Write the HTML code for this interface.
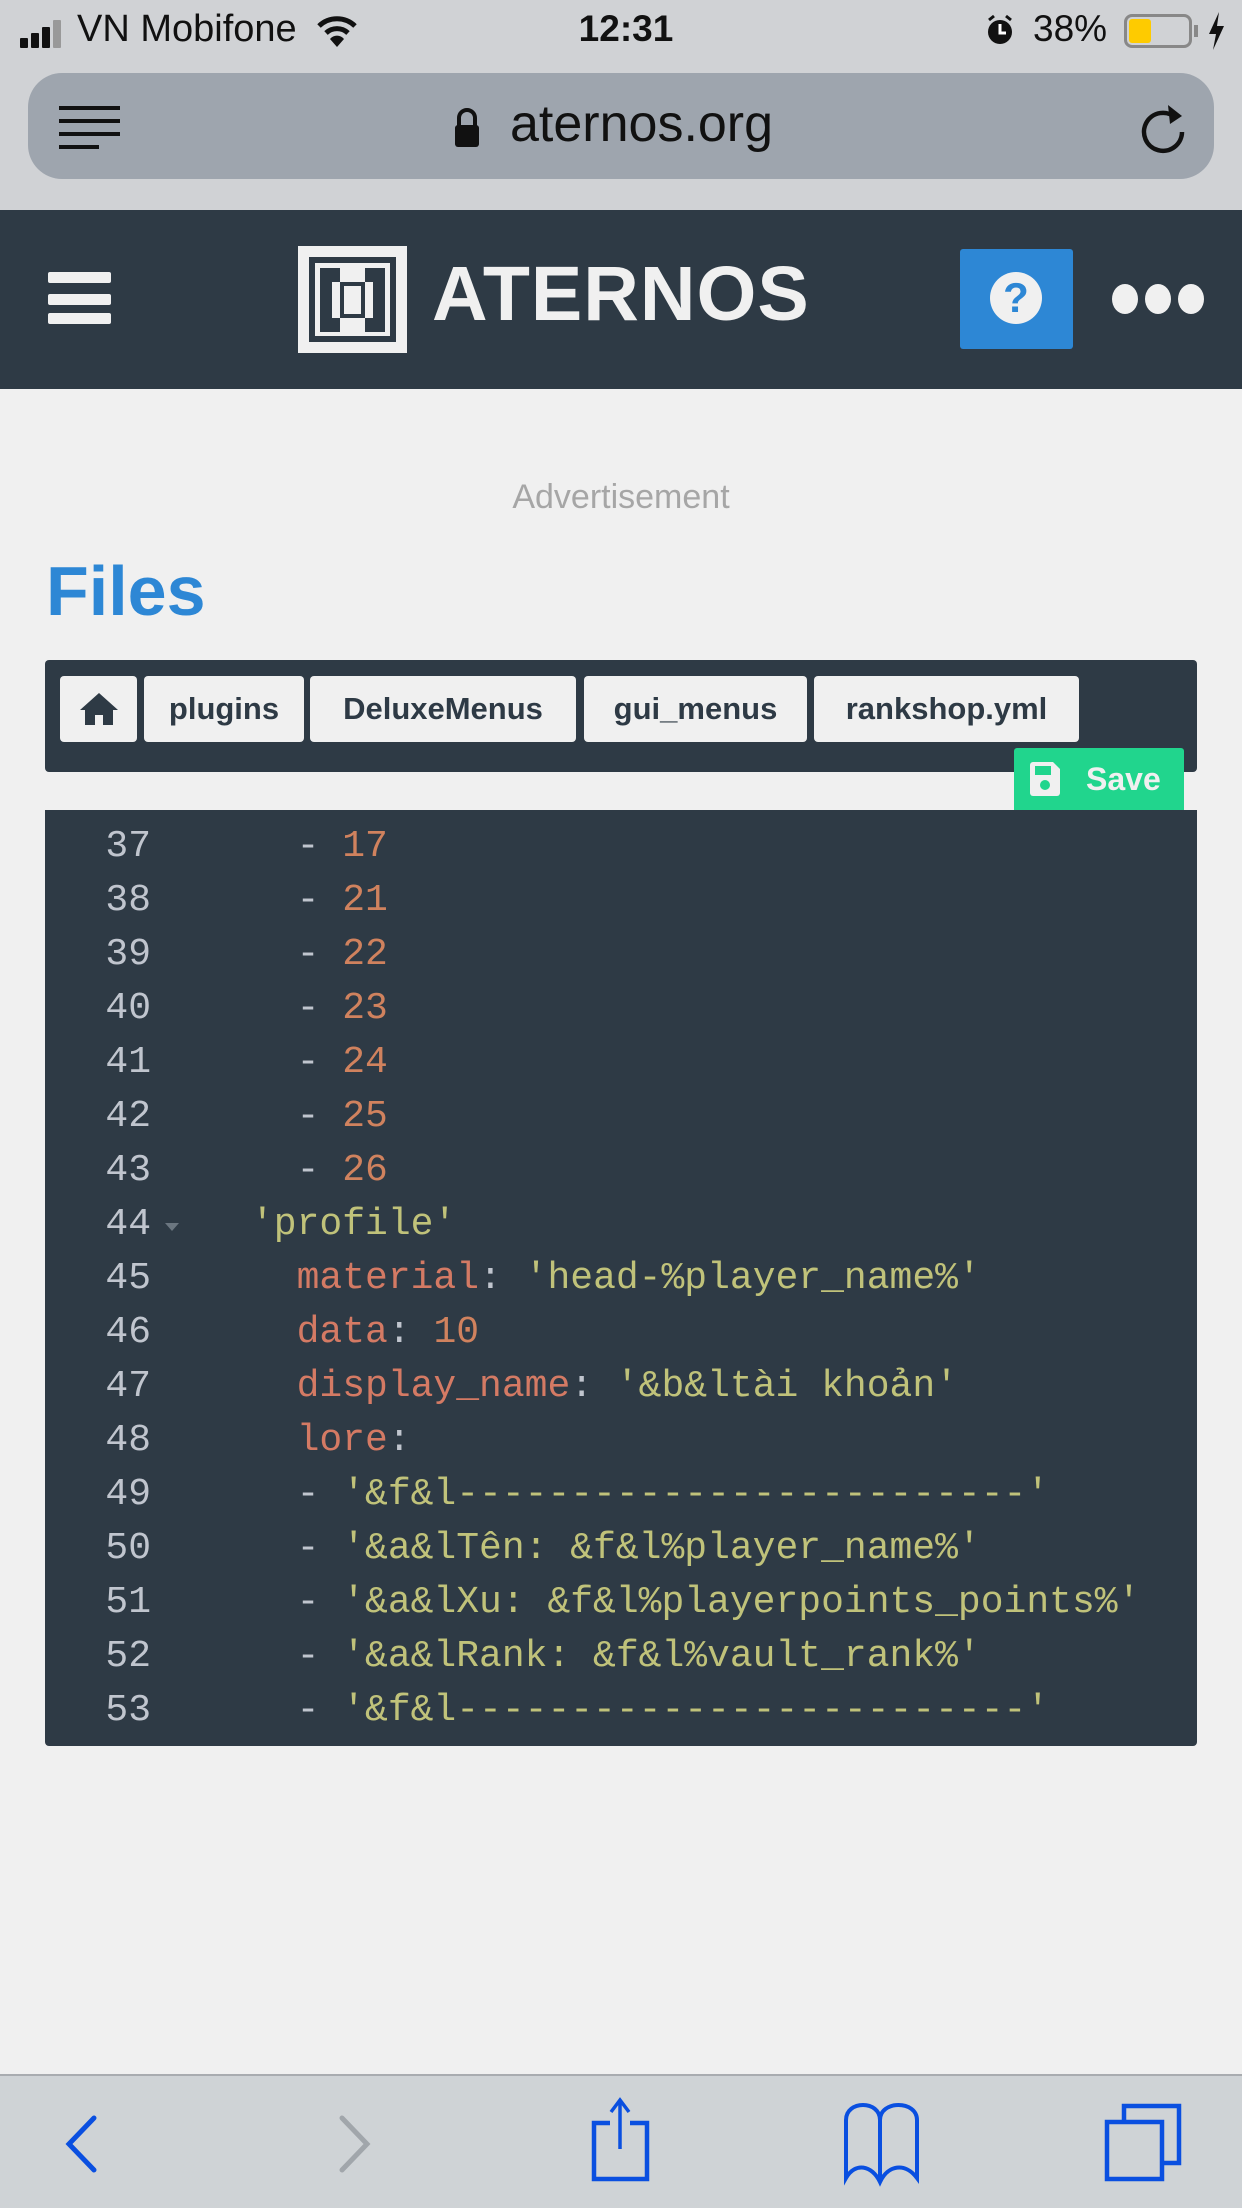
<!DOCTYPE html>
<html><head><meta charset="utf-8"><style>
*{margin:0;padding:0;box-sizing:border-box}
body{width:1242px;height:2208px;background:#f0f0f0;position:relative;overflow:hidden;font-family:"Liberation Sans",sans-serif}
.abs{position:absolute}
#status{left:0;top:0;width:1242px;height:210px;background:#d0d2d5}
#url{left:28px;top:73px;width:1186px;height:106px;border-radius:34px;background:#9ea5ae}
#hdr{left:0;top:210px;width:1242px;height:179px;background:#2e3a45}
.mono{font-family:"Liberation Mono",monospace}
.crumb{position:absolute;top:16px;height:66px;background:#f0f0f0;border-radius:4px;color:#2e3a45;font-weight:bold;font-size:31px;line-height:66px;text-align:center}
.ln{position:absolute;left:14px;width:92px;text-align:right;color:#c0c5ce}
.cd{position:absolute;left:206px;white-space:pre;color:#c0c5ce}
.n{color:#d0825e}.k{color:#d47a64}.s{color:#c0c27a}
</style></head><body>
<div id="status" class="abs"></div>
<div class="abs" style="left:20px;top:38px;width:8px;height:10px;background:#111;border-radius:1px"></div>
<div class="abs" style="left:31px;top:33px;width:8px;height:15px;background:#111;border-radius:1px"></div>
<div class="abs" style="left:42px;top:27px;width:8px;height:21px;background:#111;border-radius:1px"></div>
<div class="abs" style="left:53px;top:20px;width:8px;height:28px;background:#999;border-radius:1px"></div>
<div class="abs" style="left:77px;top:8px;font-size:38px;color:#111">VN Mobifone</div>
<svg class="abs" style="left:316px;top:14px" width="42" height="34" viewBox="0 0 42 34"><path d="M3 12 A26 26 0 0 1 39 12" stroke="#111" stroke-width="5" fill="none"/><path d="M10 19 A16 16 0 0 1 32 19" stroke="#111" stroke-width="5" fill="none"/><path d="M21 33 L14 25 A9 9 0 0 1 28 25Z" fill="#111"/></svg>
<div class="abs" style="left:556px;top:8px;width:140px;text-align:center;font-size:37px;font-weight:bold;color:#111">12:31</div>
<svg class="abs" style="left:985px;top:14px" width="30" height="32" viewBox="0 0 30 32"><circle cx="15" cy="18" r="12" fill="#111"/><path d="M15 10v9h6" stroke="#fff" stroke-width="3" fill="none"/><path d="M4 6l5-4M26 6l-5-4" stroke="#111" stroke-width="3"/></svg>
<div class="abs" style="left:1033px;top:8px;font-size:37px;color:#111">38%</div>
<div class="abs" style="left:1124px;top:14px;width:68px;height:34px;border:3px solid #888;border-radius:8px"></div>
<div class="abs" style="left:1129px;top:19px;width:22px;height:24px;background:#fecb00;border-radius:3px"></div>
<div class="abs" style="left:1194px;top:25px;width:4px;height:12px;background:#888"></div>
<svg class="abs" style="left:1206px;top:12px" width="20" height="38" viewBox="0 0 20 38"><path d="M13 0 L3 22 H10 L7 38 L18 14 H11Z" fill="#111"/></svg>
<div id="url" class="abs"></div>
<div class="abs" style="left:59px;top:106px;width:61px;height:4px;background:#111"></div>
<div class="abs" style="left:59px;top:119px;width:61px;height:4px;background:#111"></div>
<div class="abs" style="left:59px;top:132px;width:61px;height:4px;background:#111"></div>
<div class="abs" style="left:59px;top:145px;width:40px;height:4px;background:#111"></div>
<svg class="abs" style="left:452px;top:108px" width="30" height="40" viewBox="0 0 30 40"><path d="M7 18V10a8 8 0 0 1 16 0v8" stroke="#111" stroke-width="4" fill="none"/><rect x="3" y="17" width="24" height="22" rx="3" fill="#111"/></svg>
<div class="abs" style="left:510px;top:94px;font-size:52px;color:#111">aternos.org</div>
<svg class="abs" style="left:1138px;top:100px" width="52" height="56" viewBox="0 0 52 56"><path d="M38 18 A19 19 0 1 0 44 32" stroke="#111" stroke-width="4.5" fill="none"/><path d="M30 5 L44 16 L32 24Z" fill="#111"/></svg>
<div id="hdr" class="abs"></div>
<div class="abs" style="left:48px;top:272px;width:63px;height:11px;background:#f0f0f0;border-radius:2px"></div>
<div class="abs" style="left:48px;top:294px;width:63px;height:11px;background:#f0f0f0;border-radius:2px"></div>
<div class="abs" style="left:48px;top:313px;width:63px;height:11px;background:#f0f0f0;border-radius:2px"></div>
<svg class="abs" style="left:298px;top:246px" width="109" height="107" viewBox="0 0 109 107"><rect width="109" height="107" fill="#f0f0f0"/><rect x="14" y="14" width="81" height="79" fill="none" stroke="#2e3a45" stroke-width="6"/><path d="M22 22h20v14h-8v36h8v14h-20z M87 22h-20v14h8v36h-8v14h20z" fill="#2e3a45"/><rect x="42" y="36" width="25" height="36" fill="#2e3a45"/><rect x="46" y="40" width="17" height="28" fill="#f0f0f0"/></svg>
<div class="abs" style="left:432px;top:250px;font-size:77px;font-weight:bold;color:#f0f0f0;letter-spacing:1px">ATERNOS</div>
<div class="abs" style="left:960px;top:249px;width:113px;height:100px;background:#2d87d5;border-radius:3px"></div>
<div class="abs" style="left:990px;top:272px;width:52px;height:52px;border-radius:50%;background:#f0f0f0;color:#2d87d5;font-weight:bold;font-size:42px;line-height:52px;text-align:center">?</div>
<div class="abs" style="left:1112px;top:284px;width:26px;height:30px;border-radius:50%;background:#f0f0f0"></div>
<div class="abs" style="left:1145px;top:284px;width:26px;height:30px;border-radius:50%;background:#f0f0f0"></div>
<div class="abs" style="left:1178px;top:284px;width:26px;height:30px;border-radius:50%;background:#f0f0f0"></div>
<div class="abs" style="left:0;top:478px;width:1242px;text-align:center;font-size:34px;color:#a6a6a6">Advertisement</div>
<div class="abs" style="left:46px;top:551px;font-size:70px;font-weight:bold;color:#2d87d5">Files</div>
<div class="abs" style="left:45px;top:660px;width:1152px;height:112px;background:#2e3a45;border-radius:4px">
<div class="crumb" style="left:15px;width:77px"><svg width="40" height="36" viewBox="0 0 40 36" style="margin-top:15px"><path d="M20 2 L1 19 H6 V34 H16 V24 H24 V34 H34 V19 H39Z" fill="#2e3a45"/></svg></div>
<div class="crumb" style="left:99px;width:160px">plugins</div>
<div class="crumb" style="left:265px;width:266px">DeluxeMenus</div>
<div class="crumb" style="left:539px;width:223px">gui_menus</div>
<div class="crumb" style="left:769px;width:265px">rankshop.yml</div>
</div>
<div class="abs" style="left:1014px;top:748px;width:170px;height:62px;background:#21d58d;border-radius:3px 3px 0 0;color:#f0f0f0;font-weight:bold;font-size:32px;line-height:62px"><svg width="30" height="34" viewBox="0 0 30 34" style="position:absolute;left:16px;top:14px"><path d="M0 3a3 3 0 0 1 3-3h20l7 7v24a3 3 0 0 1-3 3H3a3 3 0 0 1-3-3z" fill="#f0f0f0"/><rect x="5" y="4" width="16" height="9" fill="#21d58d"/><circle cx="15" cy="23" r="5" fill="#21d58d"/></svg><span style="position:absolute;left:72px">Save</span></div>
<div class="abs mono" style="left:45px;top:810px;width:1152px;height:936px;background:#2e3a45;border-radius:0 0 4px 4px;font-size:38px;line-height:54px">
<div style="position:absolute;top:10px;left:0;width:100%">
<div class="ln" style="top:0">37</div><div class="cd" style="top:0">  - <span class="n">17</span></div>
<div class="ln" style="top:54px">38</div><div class="cd" style="top:54px">  - <span class="n">21</span></div>
<div class="ln" style="top:108px">39</div><div class="cd" style="top:108px">  - <span class="n">22</span></div>
<div class="ln" style="top:162px">40</div><div class="cd" style="top:162px">  - <span class="n">23</span></div>
<div class="ln" style="top:216px">41</div><div class="cd" style="top:216px">  - <span class="n">24</span></div>
<div class="ln" style="top:270px">42</div><div class="cd" style="top:270px">  - <span class="n">25</span></div>
<div class="ln" style="top:324px">43</div><div class="cd" style="top:324px">  - <span class="n">26</span></div>
<div class="ln" style="top:378px">44</div><div style="position:absolute;left:120px;top:403px;width:0;height:0;border-left:7px solid transparent;border-right:7px solid transparent;border-top:8px solid #6b7680"></div><div class="cd s" style="top:378px">'profile'</div>
<div class="ln" style="top:432px">45</div><div class="cd" style="top:432px">  <span class="k">material</span>: <span class="s">'head-%player_name%'</span></div>
<div class="ln" style="top:486px">46</div><div class="cd" style="top:486px">  <span class="k">data</span>: <span class="n">10</span></div>
<div class="ln" style="top:540px">47</div><div class="cd" style="top:540px">  <span class="k">display_name</span>: <span class="s">'&amp;b&amp;ltài khoản'</span></div>
<div class="ln" style="top:594px">48</div><div class="cd" style="top:594px">  <span class="k">lore</span>:</div>
<div class="ln" style="top:648px">49</div><div class="cd" style="top:648px">  - <span class="s">'&amp;f&amp;l-------------------------'</span></div>
<div class="ln" style="top:702px">50</div><div class="cd" style="top:702px">  - <span class="s">'&amp;a&amp;lTên: &amp;f&amp;l%player_name%'</span></div>
<div class="ln" style="top:756px">51</div><div class="cd" style="top:756px">  - <span class="s">'&amp;a&amp;lXu: &amp;f&amp;l%playerpoints_points%'</span></div>
<div class="ln" style="top:810px">52</div><div class="cd" style="top:810px">  - <span class="s">'&amp;a&amp;lRank: &amp;f&amp;l%vault_rank%'</span></div>
<div class="ln" style="top:864px">53</div><div class="cd" style="top:864px">  - <span class="s">'&amp;f&amp;l-------------------------'</span></div>
</div></div>
<div class="abs" style="left:0;top:2074px;width:1242px;height:134px;background:#cfd3d6;border-top:2px solid #a9acb0"></div>
<svg class="abs" style="left:0;top:2076px" width="1242" height="132" viewBox="0 2076 1242 132">
<path d="M94 2118 L69 2144 L94 2170" stroke="#0a4fe0" stroke-width="5" fill="none" stroke-linecap="round"/>
<path d="M342 2118 L367 2144 L342 2170" stroke="#a1a6ab" stroke-width="5" fill="none" stroke-linecap="round"/>
<path d="M610 2123 H594 V2179 H647 V2123 H630" stroke="#0a4fe0" stroke-width="4.5" fill="none"/>
<path d="M620 2100 V2149 M611 2112 L620 2100 L629 2112" stroke="#0a4fe0" stroke-width="3.5" fill="none"/>
<path d="M846 2178 V2120 C846 2100 880 2100 880 2120 C880 2100 917 2100 917 2120 V2178 C905 2162 888 2165 880 2182 C872 2165 855 2162 846 2178Z M880 2120 V2180" stroke="#0a4fe0" stroke-width="4" fill="none"/>
<rect x="1107" y="2122" width="55" height="57" stroke="#0a4fe0" stroke-width="4.5" fill="none"/>
<path d="M1124 2120 V2106 H1179 V2163 H1164" stroke="#0a4fe0" stroke-width="4.5" fill="none"/>
</svg>
</body></html>
